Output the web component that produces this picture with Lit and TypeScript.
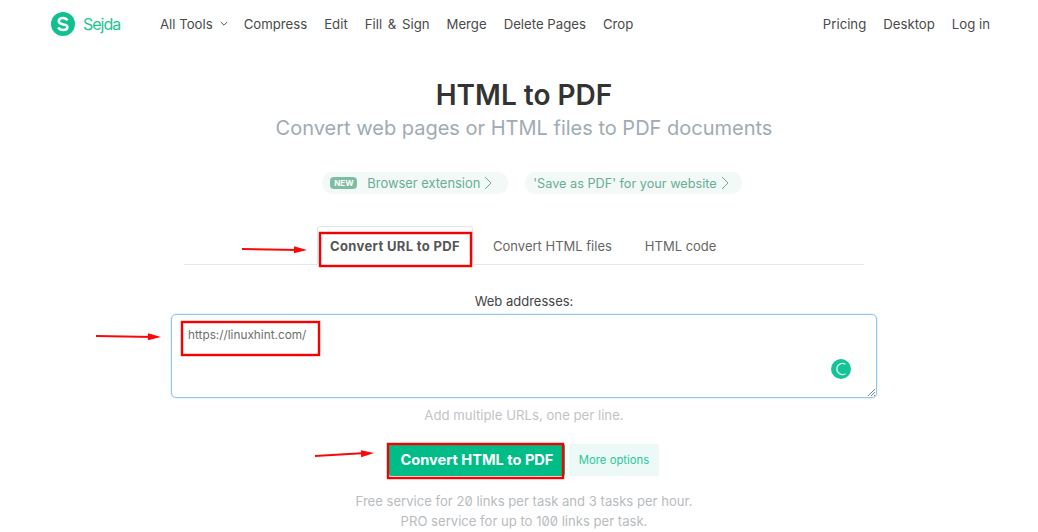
import { LitElement, html, css, svg } from "lit";
import { customElement } from "lit/decorators.js";

const arrow = (x1: number, y1: number, x2: number, y2: number) => {
  const a = Math.atan2(y2 - y1, x2 - x1);
  const deg = (a * 180) / Math.PI;
  return svg`<line x1=${x1} y1=${y1} x2=${x2 - 8} y2=${y2} stroke="#f80808" stroke-width="2"/>
  <polygon points="-13,-3.500 0,0 -13,3.500" fill="#f80808" transform="translate(${x2} ${y2}) rotate(${deg})"/>`;
};

@customElement("app-root")
export class AppRoot extends LitElement {
  static styles = css`
    :host {
      display: block;
      width: 1038px;
      height: 532px;
      overflow: hidden;
      position: relative;
      background: #fff;
      font-family: Inter, "Noto Sans", sans-serif;
      color: #4a4a4a;
    }
    header {
      display: flex;
      align-items: center;
      height: 48px;
      padding: 0 48px 0 51px;
      font-size: 13.2px;
      color: #4a4a4a;
    }
    .logo { display: flex; align-items: center; gap: 8px; width: 109px; color: #1cc68f; font-size: 16px; letter-spacing: -1px; }
    nav { display: flex; gap: 17px; align-items: center; }
    .drop { display: flex; align-items: center; gap: 7px; margin-right: -1px; }
    .wide { word-spacing: 2px; }
    .right { margin-left: auto; display: flex; gap: 17px; }
    main { display: flex; flex-direction: column; align-items: center; width: 1048px; font-feature-settings: "zero"; }
    h1 { margin: 30px 0 0; font-size: 28px; line-height: 34px; font-weight: 600; color: #333; }
    .sub { margin-top: 3px; font-size: 20px; line-height: 26px; color: #a0abb3; }
    .promos { display: flex; gap: 17px; margin: 31px 0 0 16px; }
    .promo { display: flex; align-items: center; gap: 4px; height: 22px; padding: 0 13px 0 8px; border-radius: 10px; background: #f3f9f7; font-size: 12.7px; color: #69ad95; }
    .promo.first { padding-right: 16px; font-size: 12.9px; }
    .new { background: #7fbda3; color: #fff; font-size: 8px; font-weight: 700; border-radius: 4px; width: 27px; text-align: center; line-height: 12px; margin-right: 6px; }
    .tabs { display: flex; width: 680px; height: 38px; margin-top: 32px; border-bottom: 1px solid #e4e6e8; font-size: 13px; }
    .tab { display: flex; align-items: center; padding: 0 16.5px; color: #666; margin-bottom: -1px; }
    .tab.on { margin-left: 133px; margin-right: 3.5px; padding: 0 12px; font-weight: 700; letter-spacing: 0.35px; color: #555; border: 1px solid #e4e6e8; border-bottom: 1px solid #fff; border-radius: 3px 3px 0 0; box-sizing: border-box; }
    .label { margin-top: 28px; font-size: 13px; line-height: 16px; color: #444; }
    .box { position: relative; box-sizing: border-box; width: 706px; height: 84px; margin-top: 5px; border: 1px solid #8fc3f0; border-radius: 5px; box-shadow: 0 0 2px #b5d9f7; padding: 12px 16px; font-size: 11.8px; line-height: 16px; color: #6e6e6e; }
    .grammar { position: absolute; right: 25px; bottom: 18px; width: 20px; height: 20px; }
    .grip { position: absolute; right: 0; bottom: 0; width: 9px; height: 9px; }
    .hint { margin-top: 9px; font-size: 13.2px; line-height: 16px; color: #c0c4c8; }
    .actions { display: flex; align-items: center; gap: 4px; margin-top: 21px; }
    .primary { width: 176px; height: 32px; background: #00bc87; color: #fff; font-weight: 700; font-size: 14.6px; display: flex; align-items: center; justify-content: center; border-radius: 2px; }
    .more { height: 32px; width: 90px; background: #ecf9f6; color: #2cc79b; font-size: 11.3px; display: flex; align-items: center; justify-content: center; border-radius: 3px; }
    .note { margin-top: 15px; font-size: 13.1px; line-height: 20px; color: #b8bcc0; text-align: center; }
    .ann { position: absolute; inset: 0; width: 1038px; height: 532px; pointer-events: none; }
  `;

  render() {
    const chev = html`<svg width="8" height="14" viewBox="0 0 8 14"><path d="M1 1l6 6-6 6" fill="none" stroke="#69ad95" stroke-width="1"/></svg>`;
    return html`
      <header>
        <div class="logo">
          <svg width="24" height="24" viewBox="0 0 24 24">
            <circle cx="12" cy="12" r="12" fill="#10c08f"/>
            <path d="M16.500 8.400C15.500 6.800 13.800 6 12 6c-2.300 0-4.200 1.200-4.200 3.300 0 4.400 8.600 2 8.600 5.700 0 2.100-2.200 3-4.400 3-2 0-3.700-.8-4.800-2.400" fill="none" stroke="#fff" stroke-width="2.600"/>
          </svg>
          <span>Sejda</span>
        </div>
        <nav>
          <span class="drop">All Tools
            <svg width="8" height="6" viewBox="0 0 8 6"><path d="M.8 1l3.200 3.200L7.200 1" fill="none" stroke="#555" stroke-width="1"/></svg>
          </span>
          <span>Compress</span><span>Edit</span><span class="wide">Fill &amp; Sign</span><span>Merge</span><span>Delete Pages</span><span>Crop</span>
        </nav>
        <div class="right"><span>Pricing</span><span>Desktop</span><span>Log in</span></div>
      </header>
      <main>
        <h1>HTML to PDF</h1>
        <div class="sub">Convert web pages or HTML files to PDF documents</div>
        <div class="promos">
          <div class="promo first"><span class="new">NEW</span><span>Browser extension</span>${chev}</div>
          <div class="promo"><span>'Save as PDF' for your website</span>${chev}</div>
        </div>
        <div class="tabs">
          <div class="tab on">Convert URL to PDF</div>
          <div class="tab">Convert HTML files</div>
          <div class="tab">HTML code</div>
        </div>
        <div class="label">Web addresses:</div>
        <div class="box">
          https://linuxhint.com/
          <svg class="grammar" viewBox="0 0 20 20">
            <circle cx="10" cy="10" r="10" fill="#15c39a"/>
            <path d="M14 5A5.600 5.600 0 1 0 14 15" fill="none" stroke="#d5f3ea" stroke-width="1.300" stroke-linecap="round"/>
          </svg>
          <svg class="grip" viewBox="0 0 9 9"><path d="M1 8l7-7M4 8l4-4M7 8l1-1" stroke="#888" stroke-width="1"/></svg>
        </div>
        <div class="hint">Add multiple URLs, one per line.</div>
        <div class="actions">
          <div class="primary">Convert HTML to PDF</div>
          <div class="more">More options</div>
        </div>
        <div class="note">Free service for 20 links per task and 3 tasks per hour.<br />PRO service for up to 100 links per task.</div>
      </main>
      <svg class="ann" viewBox="0 0 1038 532">
        <g fill="none" stroke="#f80000" stroke-width="2.400">
          <rect x="320" y="233" width="151" height="33"/>
          <rect x="182" y="322" width="137" height="33"/>
          <rect x="388" y="444" width="175" height="34"/>
        </g>
        ${arrow(242, 249, 307, 250)}
        ${arrow(96, 336, 161, 337)}
        ${arrow(315, 456, 374, 453)}
      </svg>
    `;
  }
}
